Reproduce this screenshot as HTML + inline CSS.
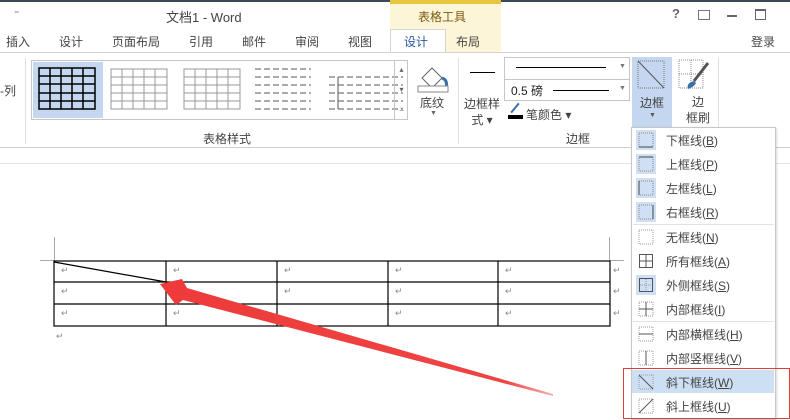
<!DOCTYPE html>
<html><head><meta charset="utf-8"><style>
*{margin:0;padding:0;box-sizing:border-box}
body{width:790px;height:420px;overflow:hidden;background:#fff;font-family:"Liberation Sans","Noto Sans CJK SC",sans-serif;font-size:12px;color:#444;position:relative}
.a{position:absolute;white-space:nowrap}
.tab{position:absolute;top:33px;font-size:12px;color:#444}
.mi{position:absolute;left:632px;width:142px;height:24px}
.mi svg{position:absolute;left:4px;top:2px}
.mi span{position:absolute;left:34px;top:4px;font-size:12px;color:#444}
.ret{position:absolute;font-size:9px;color:#888}
</style></head><body>
<div class="a" style="left:0;top:0;width:790px;height:2px;background:#3a4a5a"></div>
<div class="a" style="left:390px;top:0;width:111px;height:30px;background:#fdf5d7;border-top:4px solid #e8c640"></div>
<div class="a" style="left:14px;top:9px;font-size:10px;color:#666">⁼</div>
<div class="a" style="left:166px;top:7px;font-size:13px;color:#444">文档1 - Word</div>
<div class="a" style="left:418px;top:8px;font-size:12px;color:#7a5a10">表格工具</div>
<div class="a" style="left:672px;top:6px;font-size:13px;color:#666;font-weight:bold">?</div>
<div class="a" style="left:698px;top:10px;width:12px;height:10px;border:1px solid #777"></div>
<div class="a" style="left:727px;top:15px;width:10px;height:2px;background:#666"></div>
<div class="a" style="left:755px;top:9px;width:11px;height:11px;border:1px solid #666;border-top-width:2px"></div>
<div class="a" style="left:390px;top:30px;width:111px;height:22px;background:#fdf5d7"></div>
<div class="a" style="left:390px;top:29px;width:56px;height:24px;background:#fff;border:1px solid #d4d4d4;border-bottom:none"></div>
<div class="tab" style="left:6px">插入</div>
<div class="tab" style="left:59px">设计</div>
<div class="tab" style="left:112px">页面布局</div>
<div class="tab" style="left:189px">引用</div>
<div class="tab" style="left:242px">邮件</div>
<div class="tab" style="left:295px">审阅</div>
<div class="tab" style="left:348px">视图</div>
<div class="tab" style="left:404px;color:#2b579a">设计</div>
<div class="tab" style="left:456px">布局</div>
<div class="tab" style="left:751px">登录</div>
<div class="a" style="left:0;top:52px;width:790px;height:1px;background:#d4d4d4"></div>
<div class="a" style="left:0;top:53px;width:790px;height:95px;background:#fff;border-bottom:1px solid #d0d0d0"></div>
<div class="a" style="left:0;top:82px;font-size:12px">-列</div>
<div class="a" style="left:25px;top:58px;width:1px;height:86px;background:#e0e0e0"></div>
<div class="a" style="left:31px;top:60px;width:377px;height:60px;border:1px solid #c6c6c6;background:#fff"></div>
<div class="a" style="left:33px;top:62px;width:70px;height:56px;background:#c5d7f0"></div>
<svg class="a" style="left:31px;top:60px" width="380" height="60">
<g stroke="#000" stroke-width="1.5" fill="none"><rect x="8" y="8" width="56" height="41"/><path d="M8 16H64M8 24H64M8 33H64M8 41H64M19 8V49M30 8V49M41 8V49M52 8V49"/></g>
<g stroke="#999" fill="none"><rect x="80" y="9" width="56" height="40"/><path d="M80 17H136M80 25H136M80 33H136M80 41H136M91 9V49M102 9V49M113 9V49M124 9V49"/></g>
<g stroke="#999" fill="none"><rect x="153" y="9" width="56" height="40"/><path d="M153 17H209M153 25H209M153 33H209M153 41H209M164 9V49M175 9V49M186 9V49M197 9V49"/></g>
<g stroke="#555" fill="none"><path d="M224 9H280M224 17H280M224 25H280M224 33H280M224 41H280M224 49H280" stroke-dasharray="6 3"/></g>
<g stroke="#555" fill="none"><path d="M298 17H372M298 25H372M298 33H372M298 41H372M298 49H372" stroke-dasharray="6 3"/><path d="M307 17V49"/></g>
</svg>
<div class="a" style="left:394px;top:60px;width:14px;height:60px;border-left:1px solid #c6c6c6;font-size:8px;color:#666;line-height:20px;text-align:center">▴<br>▾<br>⩡</div>
<svg class="a" style="left:416px;top:60px" width="36" height="36"><path d="M6 18L16 8 26 18 16 28Z" fill="none" stroke="#666"/><path d="M26 18Q32 20 30 28" stroke="#3a6ea8" stroke-width="3" fill="none"/><rect x="2" y="26" width="30" height="6" fill="#fff" stroke="#888"/></svg>
<div class="a" style="left:420px;top:94px;font-size:12px">底纹</div>
<div class="a" style="left:430px;top:110px;font-size:7px;color:#666">▼</div>
<div class="a" style="left:458px;top:58px;width:1px;height:86px;background:#e0e0e0"></div>
<div class="a" style="left:203px;top:130px;font-size:12px">表格样式</div>
<div class="a" style="left:470px;top:72px;width:25px;height:1px;background:#000"></div>
<div class="a" style="left:464px;top:96px;font-size:12px;line-height:16px;text-align:center">边框样<br>式 ▾</div>
<div class="a" style="left:504px;top:57px;width:126px;height:23px;border:1px solid #c6c6c6"></div>
<div class="a" style="left:516px;top:67px;width:90px;height:1px;background:#000"></div>
<div class="a" style="left:619px;top:63px;font-size:7px;color:#777">▼</div>
<div class="a" style="left:504px;top:79px;width:126px;height:22px;border:1px solid #c6c6c6"></div>
<div class="a" style="left:511px;top:82px;font-size:12px;color:#222">0.5 磅</div>
<div class="a" style="left:553px;top:90px;width:56px;height:1px;background:#000"></div>
<div class="a" style="left:619px;top:85px;font-size:7px;color:#777">▼</div>
<div class="a" style="left:508px;top:115px;width:15px;height:4px;background:#000"></div>
<div class="a" style="left:514px;top:102px;width:2px;height:12px;background:#3a6ea8;transform:rotate(40deg)"></div>
<div class="a" style="left:526px;top:106px;font-size:12px">笔颜色 ▾</div>
<div class="a" style="left:566px;top:130px;font-size:12px">边框</div>
<div class="a" style="left:632px;top:57px;width:40px;height:70px;background:#c5d7f0"></div>
<svg class="a" style="left:637px;top:60px" width="30" height="30"><rect x="1" y="1" width="26" height="27" fill="none" stroke="#777" stroke-dasharray="1 1"/><path d="M1 1L27 28" stroke="#555"/></svg>
<div class="a" style="left:640px;top:94px;font-size:12px">边框</div>
<div class="a" style="left:649px;top:112px;font-size:7px;color:#555">▼</div>
<svg class="a" style="left:678px;top:59px" width="32" height="32"><rect x="1" y="1" width="24" height="28" fill="none" stroke="#888" stroke-dasharray="1 1"/><path d="M13 1V29M1 15H25" stroke="#888" stroke-dasharray="1 1"/><path d="M30 4L16 22" stroke="#555" stroke-width="3"/><path d="M16 22Q8 24 10 30 16 28 18 24Z" fill="#3a6ea8"/></svg>
<div class="a" style="left:686px;top:94px;font-size:12px;line-height:16px;text-align:center">边<br>框刷</div>
<div class="a" style="left:718px;top:58px;width:1px;height:70px;background:#e0e0e0"></div>
<div class="a" style="left:0;top:163px;width:790px;height:1px;background:#e4e4e4"></div>
<div class="a" style="left:54px;top:237px;width:1px;height:24px;background:#aaa"></div>
<div class="a" style="left:40px;top:260px;width:14px;height:1px;background:#aaa"></div>
<div class="a" style="left:609px;top:237px;width:1px;height:24px;background:#aaa"></div>
<div class="a" style="left:610px;top:260px;width:14px;height:1px;background:#aaa"></div>
<svg class="a" style="left:0;top:0" width="790" height="420">
<g stroke="#000" stroke-width="1.2" fill="none">
<rect x="54" y="261" width="556" height="65"/>
<path d="M54 282H610M54 304H610M166 261V326M277 261V326M388 261V326M498 261V326M54 262L166 282"/>
</g>
</svg>
<div class="ret" style="left:61px;top:265px">↵</div><div class="ret" style="left:173px;top:265px">↵</div><div class="ret" style="left:284px;top:265px">↵</div><div class="ret" style="left:395px;top:265px">↵</div><div class="ret" style="left:505px;top:265px">↵</div><div class="ret" style="left:613px;top:265px">↵</div>
<div class="ret" style="left:61px;top:286px">↵</div><div class="ret" style="left:284px;top:286px">↵</div><div class="ret" style="left:395px;top:286px">↵</div><div class="ret" style="left:505px;top:286px">↵</div><div class="ret" style="left:613px;top:286px">↵</div>
<div class="ret" style="left:61px;top:308px">↵</div><div class="ret" style="left:173px;top:308px">↵</div><div class="ret" style="left:505px;top:308px">↵</div><div class="ret" style="left:395px;top:308px">↵</div><div class="ret" style="left:613px;top:308px">↵</div>
<div class="ret" style="left:56px;top:331px">↵</div>
<div class="a" style="left:631px;top:127px;width:145px;height:293px;background:#fff;border:1px solid #c6c6c6;box-shadow:1px 1px 2px rgba(0,0,0,.15)"></div>
<div class="a" style="left:632px;top:370px;width:142px;height:23px;background:#cddff3"></div>
<div class="mi" style="top:128px"><svg width="20" height="20"><rect x="0" y="0" width="20" height="20" fill="#cfe0f5"/><rect x="3" y="3" width="14" height="14" fill="none" stroke="#888" stroke-dasharray="1 1"/><path d="M3 17H17" stroke="#444"/></svg><span>下框线(<u>B</u>)</span></div>
<div class="mi" style="top:152px"><svg width="20" height="20"><rect x="0" y="0" width="20" height="20" fill="#cfe0f5"/><rect x="3" y="3" width="14" height="14" fill="none" stroke="#888" stroke-dasharray="1 1"/><path d="M3 3H17" stroke="#444"/></svg><span>上框线(<u>P</u>)</span></div>
<div class="mi" style="top:176px"><svg width="20" height="20"><rect x="0" y="0" width="20" height="20" fill="#cfe0f5"/><rect x="3" y="3" width="14" height="14" fill="none" stroke="#888" stroke-dasharray="1 1"/><path d="M3 3V17" stroke="#444"/></svg><span>左框线(<u>L</u>)</span></div>
<div class="mi" style="top:200px"><svg width="20" height="20"><rect x="0" y="0" width="20" height="20" fill="#cfe0f5"/><rect x="3" y="3" width="14" height="14" fill="none" stroke="#888" stroke-dasharray="1 1"/><path d="M17 3V17" stroke="#444"/></svg><span>右框线(<u>R</u>)</span></div>
<div class="a" style="left:633px;top:224px;width:141px;height:1px;background:#e2e2e2"></div>
<div class="mi" style="top:225px"><svg width="20" height="20"><rect x="3" y="3" width="14" height="14" fill="none" stroke="#999" stroke-dasharray="1 1"/></svg><span>无框线(<u>N</u>)</span></div>
<div class="mi" style="top:249px"><svg width="20" height="20"><rect x="3.5" y="3.5" width="13" height="13" fill="none" stroke="#555"/><path d="M10 3V17M3 10H17" stroke="#555"/></svg><span>所有框线(<u>A</u>)</span></div>
<div class="mi" style="top:273px"><svg width="20" height="20"><rect x="0" y="0" width="20" height="20" fill="#cfe0f5"/><rect x="3.5" y="3.5" width="13" height="13" fill="none" stroke="#555"/><path d="M10 4V16M4 10H16" stroke="#999" stroke-dasharray="1 1"/></svg><span>外侧框线(<u>S</u>)</span></div>
<div class="mi" style="top:297px"><svg width="20" height="20"><rect x="3" y="3" width="14" height="14" fill="none" stroke="#999" stroke-dasharray="1 1"/><path d="M10 3V17M3 10H17" stroke="#555"/></svg><span>内部框线(<u>I</u>)</span></div>
<div class="a" style="left:633px;top:321px;width:141px;height:1px;background:#e2e2e2"></div>
<div class="mi" style="top:322px"><svg width="20" height="20"><rect x="3" y="3" width="14" height="14" fill="none" stroke="#999" stroke-dasharray="1 1"/><path d="M3 10H17" stroke="#555"/></svg><span>内部横框线(<u>H</u>)</span></div>
<div class="mi" style="top:346px"><svg width="20" height="20"><rect x="3" y="3" width="14" height="14" fill="none" stroke="#999" stroke-dasharray="1 1"/><path d="M10 3V17" stroke="#555"/></svg><span>内部竖框线(<u>V</u>)</span></div>
<div class="mi" style="top:370px"><svg width="20" height="20"><rect x="3" y="3" width="14" height="14" fill="none" stroke="#999" stroke-dasharray="1 1"/><path d="M3 3L17 17" stroke="#555"/></svg><span>斜下框线(<u>W</u>)</span></div>
<div class="mi" style="top:394px"><svg width="20" height="20"><rect x="3" y="3" width="14" height="14" fill="none" stroke="#999" stroke-dasharray="1 1"/><path d="M3 17L17 3" stroke="#555"/></svg><span>斜上框线(<u>U</u>)</span></div>
<div class="a" style="left:623px;top:368px;width:167px;height:51px;border:1px solid #d9403a"></div>
<svg class="a" style="left:0;top:0" width="790" height="420">
<defs><linearGradient id="g" x1="553" y1="395" x2="160" y2="284" gradientUnits="userSpaceOnUse"><stop offset="0" stop-color="#f6b0b0"/><stop offset=".12" stop-color="#ef4444"/><stop offset="1" stop-color="#ee3a3a"/></linearGradient></defs>
<path d="M160 284L182 279 187 288 553 394 553 396 183 300 176 305Z" fill="url(#g)"/>
</svg>
</body></html>
